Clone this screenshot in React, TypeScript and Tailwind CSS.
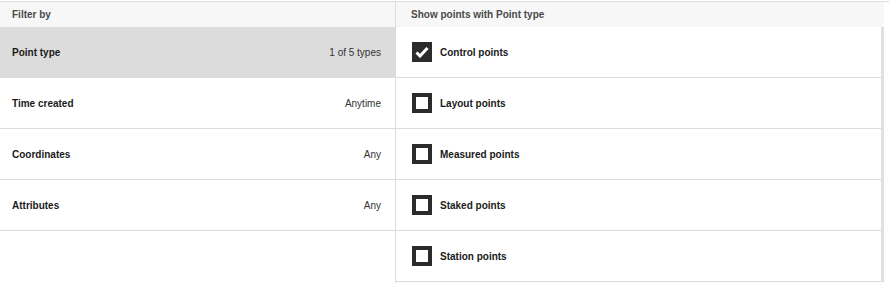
const filters = [
  { label: "Point type", value: "1 of 5 types", active: true },
  { label: "Time created", value: "Anytime" },
  { label: "Coordinates", value: "Any" },
  { label: "Attributes", value: "Any" },
];

const types = [
  { label: "Control points", checked: true },
  { label: "Layout points" },
  { label: "Measured points" },
  { label: "Staked points" },
  { label: "Station points" },
];

function Checkbox({ checked }: { checked?: boolean }) {
  if (checked) {
    return (
      <span className="flex h-5 w-5 items-center justify-center bg-[#2b2b2b]">
        <svg width="14" height="12" viewBox="0 0 14 12">
          <path d="M1.5 6.5 L5 10 L12.5 2" fill="none" stroke="#fff" strokeWidth="3" />
        </svg>
      </span>
    );
  }
  return <span className="block h-5 w-5 border-4 border-[#2b2b2b] bg-white" />;
}

export default function App() {
  return (
    <div className="h-[283px] w-[889px] bg-white pt-px font-['Liberation_Sans',Arial,sans-serif] text-[10px]">
      <div className="flex h-full border-t border-[#dcdcdc]">
        {/* Left: filter list */}
        <div className="w-[396px] flex-none border-r border-[#dcdcdc]">
          <div className="flex h-[25px] items-center bg-[#f7f7f7] px-3 font-bold text-[#4a4a4a]">
            Filter by
          </div>
          {filters.map((f) => (
            <div
              key={f.label}
              className={`flex h-[51px] items-center justify-between border-b border-[#dcdcdc] pl-3 pr-[14px] ${
                f.active ? "bg-[#dcdcdc]" : "bg-white"
              }`}
            >
              <span className="font-bold text-[#1a1a1a]">{f.label}</span>
              <span className="text-[#333]">{f.value}</span>
            </div>
          ))}
        </div>

        {/* Right: point types */}
        <div className="w-[488px] flex-none">
          <div className="flex h-[25px] items-center bg-[#f7f7f7] px-[15px] font-bold text-[#4a4a4a]">
            Show points with Point type
          </div>
          <div className="border-r-[3px] border-[#e0e0e0]">
            {types.map((t) => (
              <div
                key={t.label}
                className="flex h-[51px] items-center gap-2 border-b border-[#dcdcdc] pl-4"
              >
                <Checkbox checked={t.checked} />
                <span className="font-bold text-[#1a1a1a]">{t.label}</span>
              </div>
            ))}
          </div>
        </div>
      </div>
    </div>
  );
}
